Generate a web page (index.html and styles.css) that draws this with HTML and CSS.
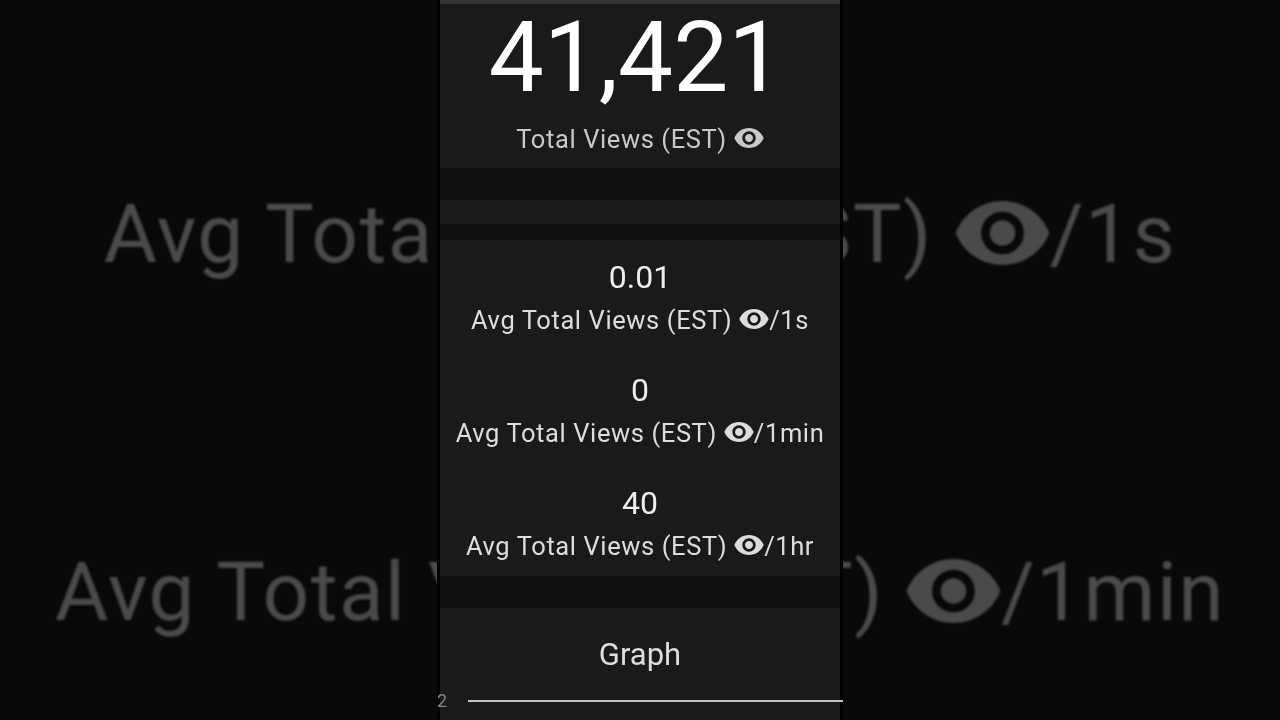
FILE: index.html
```html
<!DOCTYPE html>
<html lang="en">
<head>
<meta charset="utf-8">
<title>Total Views</title>
<link rel="stylesheet" href="styles.css">
</head>
<body>
<svg class="defs" width="0" height="0" aria-hidden="true">
  <symbol id="eye" viewBox="1 4.5 22 15">
    <path fill="currentColor" d="M12 4.5C7 4.5 2.73 7.61 1 12c1.73 4.39 6 7.5 11 7.5s9.27-3.11 11-7.5c-1.73-4.39-6-7.5-11-7.5zM12 17c-2.76 0-5-2.24-5-5s2.24-5 5-5 5 2.24 5 5-2.24 5-5 5zm0-8c-1.66 0-3 1.34-3 3s1.34 3 3 3 3-1.34 3-3-1.34-3-3-3z"/>
  </symbol>
</svg>
<div class="stage">
  <div class="backdrop" aria-hidden="true">
    <div class="ghost ghost-first">Avg Total Views (EST) <svg class="eye"><use href="#eye"/></svg>/1s</div>
    <div class="ghost ghost-second">Avg Total Views (EST) <svg class="eye"><use href="#eye"/></svg>/1min</div>
  </div>
  <main class="phone">
    <section class="card card-total">
      <div class="total">41,421</div>
      <div class="label">Total Views (EST) <svg class="eye"><use href="#eye"/></svg></div>
    </section>
    <section class="card card-strip"></section>
    <section class="card card-stats">
      <div class="stat">
        <div class="value">0.01</div>
        <div class="label">Avg Total Views (EST) <svg class="eye"><use href="#eye"/></svg>/1s</div>
      </div>
      <div class="stat">
        <div class="value">0</div>
        <div class="label">Avg Total Views (EST) <svg class="eye"><use href="#eye"/></svg>/1min</div>
      </div>
      <div class="stat">
        <div class="value">40</div>
        <div class="label">Avg Total Views (EST) <svg class="eye"><use href="#eye"/></svg>/1hr</div>
      </div>
    </section>
    <section class="card card-graph">
      <div class="graph-title">Graph</div>
      <div class="axis"><span class="tick">2</span><span class="rule"></span></div>
    </section>
  </main>
</div>
</body>
</html>
```
FILE: styles.css
```css
html, body {
  margin: 0;
  padding: 0;
  background: #090909;
}

.defs {
  position: absolute;
}

.stage {
  position: relative;
  width: 1280px;
  height: 720px;
  overflow: hidden;
  display: flex;
  justify-content: center;
  background: #090909;
  font-family: Roboto, "Liberation Sans", sans-serif;
}

.backdrop {
  position: absolute;
  inset: 0;
  display: flex;
  flex-direction: column;
  align-items: center;
  filter: blur(1px);
}

.ghost {
  font-size: 82px;
  line-height: 90px;
  letter-spacing: 1.4px;
  color: #4a4a4a;
  white-space: nowrap;
}

.ghost-first {
  margin-top: 189px;
}

.ghost-second {
  margin-top: 268px;
}

.ghost .eye {
  width: 95px;
  height: 64px;
  vertical-align: -3px;
}

.eye {
  display: inline-block;
  width: 30px;
  height: 20px;
  vertical-align: 0;
}

.phone {
  position: relative;
  box-sizing: border-box;
  width: 406px;
  height: 720px;
  display: flex;
  flex-direction: column;
  background: #111111;
  border-left: 3px solid #020202;
  border-right: 3px solid #020202;
  filter: blur(0.3px);
}

.card {
  background: #1a1a1a;
}

.card-total {
  box-sizing: border-box;
  height: 168px;
  border-top: 4px solid #333333;
  display: flex;
  flex-direction: column;
  align-items: center;
}

.total {
  font-size: 98px;
  line-height: 100px;
  margin-top: 4px;
  margin-right: 8px;
  color: #ffffff;
}

.card-total .label {
  margin-top: 16px;
  color: #c9c9c9;
}

.label {
  font-size: 25.5px;
  line-height: 30px;
  letter-spacing: 0.6px;
  color: #dddddd;
  white-space: nowrap;
  text-align: center;
}

.card-strip {
  height: 24px;
  margin-top: 32px;
}

.card-stats {
  box-sizing: border-box;
  height: 336px;
  margin-top: 16px;
  padding-top: 18px;
  display: flex;
  flex-direction: column;
  gap: 36px;
}

.stat {
  display: flex;
  flex-direction: column;
  align-items: center;
  gap: 9px;
}

.value {
  font-size: 32px;
  line-height: 38px;
  color: #eeeeee;
}

.card-graph {
  flex: 1;
  margin-top: 32px;
}

.graph-title {
  margin-top: 29px;
  font-size: 31px;
  line-height: 36px;
  text-align: center;
  color: #dddddd;
}

.axis {
  margin-top: 27px;
  margin-right: -3px;
  display: flex;
  align-items: center;
}

.tick {
  width: 28px;
  flex: none;
  margin-left: -3px;
  font-size: 18px;
  line-height: 2px;
  color: #888888;
}

.rule {
  flex: 1;
  height: 2px;
  margin-left: 3px;
  background: #c4c4c4;
}
```
